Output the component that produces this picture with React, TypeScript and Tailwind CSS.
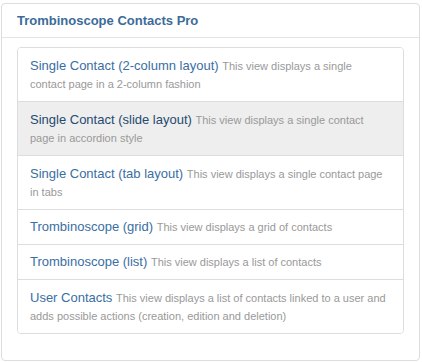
import React from "react";

const items = [
  { t: "Single Contact (2-column layout)", d: "This view displays a single contact page in a 2-column fashion", two: true },
  { t: "Single Contact (slide layout)", d: "This view displays a single contact page in accordion style", active: true, two: true },
  { t: "Single Contact (tab layout)", d: "This view displays a single contact page in tabs", two: true },
  { t: "Trombinoscope (grid)", d: "This view displays a grid of contacts" },
  { t: "Trombinoscope (list)", d: "This view displays a list of contacts" },
  { t: "User Contacts", d: "This view displays a list of contacts linked to a user and adds possible actions (creation, edition and deletion)", two: true },
];

export default function App() {
  return (
    <div className="w-[422px] h-[362px] bg-white pt-[3px] pl-[1px]" style={{ fontFamily: '"Liberation Sans", Arial, sans-serif' }}>
      <div className="w-[419px] h-[358px] border border-[#dddddd] rounded-[4px] bg-white">
        <div className="h-[34px] border-b border-[#e5e5e5] px-[15px] flex items-center">
          <span className="text-[13px] font-bold text-[#3b6b9a] leading-[18px]">Trombinoscope Contacts Pro</span>
        </div>
        <div className="pt-[9px] px-[15px]">
          <div className="w-[387px] border border-[#dddddd] rounded-[4px] overflow-hidden">
            {items.map((it, i) => (
              <div
                key={i}
                className={
                  (i > 0 ? "border-t border-[#dddddd] " : "") +
                  (it.active ? "bg-[#eeeeee] " : "bg-white ") +
                  (it.two ? "pt-[9px] " : "pt-[8px] ") +
                  "pl-[12px] pr-[14px] pb-[8px] text-[13px] leading-[18px]"
                }
              >
                <span className={"leading-[18px] " + (it.active ? "text-[#254a70]" : "text-[#3a6ea3]")}>{it.t}</span>{" "}
                <span className="text-[11px] leading-[13px] text-[#999999]">{it.d}</span>
              </div>
            ))}
          </div>
        </div>
      </div>
    </div>
  );
}
